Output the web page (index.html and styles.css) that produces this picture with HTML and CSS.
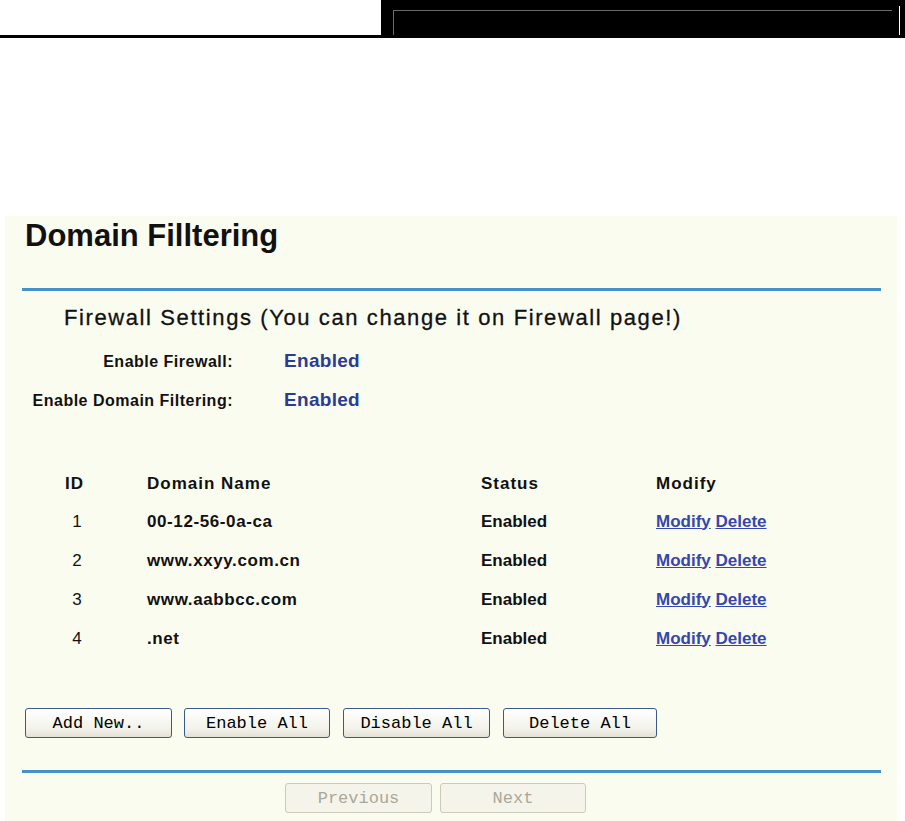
FILE: index.html
```html
<!DOCTYPE html>
<html lang="en">
<head>
<meta charset="utf-8">
<title>Domain Filtering</title>
<link rel="stylesheet" href="styles.css">
</head>
<body>
<div class="topbar">
  <div class="top-left"></div>
  <div class="top-right">
    <div class="frame"></div>
    <div class="wline"></div>
  </div>
</div>

<div class="panel">
  <h1 class="title">Domain Filltering</h1>
  <div class="rule"></div>
  <h2 class="subtitle">Firewall Settings (You can change it on Firewall page!)</h2>
  <div class="setting">
    <span class="label">Enable Firewall:</span>
    <span class="value">Enabled</span>
  </div>
  <div class="setting">
    <span class="label">Enable Domain Filtering:</span>
    <span class="value">Enabled</span>
  </div>

  <div class="grid">
    <div class="hd c-id">ID</div>
    <div class="hd c-name">Domain Name</div>
    <div class="hd c-status">Status</div>
    <div class="hd c-mod">Modify</div>

    <div class="cell c-id num">1</div>
    <div class="cell c-name">00-12-56-0a-ca</div>
    <div class="cell c-status">Enabled</div>
    <div class="cell c-mod"><a href="#">Modify</a> <a href="#">Delete</a></div>

    <div class="cell c-id num">2</div>
    <div class="cell c-name">www.xxyy.com.cn</div>
    <div class="cell c-status">Enabled</div>
    <div class="cell c-mod"><a href="#">Modify</a> <a href="#">Delete</a></div>

    <div class="cell c-id num">3</div>
    <div class="cell c-name">www.aabbcc.com</div>
    <div class="cell c-status">Enabled</div>
    <div class="cell c-mod"><a href="#">Modify</a> <a href="#">Delete</a></div>

    <div class="cell c-id num">4</div>
    <div class="cell c-name">.net</div>
    <div class="cell c-status">Enabled</div>
    <div class="cell c-mod"><a href="#">Modify</a> <a href="#">Delete</a></div>
  </div>

  <div class="actions">
    <button class="btn w147">Add New..</button>
    <button class="btn w146">Enable All</button>
    <button class="btn w147">Disable All</button>
    <button class="btn w154">Delete All</button>
  </div>
  <div class="rule rule-bottom"></div>
  <div class="nav">
    <button class="btn w147" disabled>Previous</button>
    <button class="btn w146" disabled>Next</button>
  </div>
</div>
</body>
</html>
```

FILE: styles.css
```css
html, body {
  margin: 0;
  padding: 0;
  background: #ffffff;
}
body {
  width: 905px;
  height: 821px;
  overflow: hidden;
  font-family: "Liberation Sans", Arial, sans-serif;
  color: #111;
}

/* top header strip */
.topbar {
  display: flex;
  height: 35px;
  border-bottom: 3px solid #000;
}
.top-left {
  width: 381px;
  background: #fff;
}
.top-right {
  flex: 1;
  background: #000;
  display: flex;
  align-items: flex-end;
  padding-left: 12px;
}
.frame {
  width: 498px;
  height: 24px;
  border-top: 1px solid #6a6a6a;
  border-left: 1px solid #6a6a6a;
}
.wline {
  width: 1px;
  height: 29px;
  background: #fff;
  margin-left: 7px;
}

/* content panel */
.panel {
  margin: 178px 8px 0 5px;
  background: #fbfcf0;
  padding: 2px 16px 20px 17px;
  height: 600px;
}
.title {
  margin: 0 0 0 3px;
  font-size: 31px;
  line-height: 36px;
  font-weight: bold;
  color: #111;
}
.rule {
  height: 3px;
  background: #4592c8;
  margin-top: 34px;
}
.subtitle {
  margin: 14px 0 0 42px;
  font-size: 22px;
  line-height: 26px;
  font-weight: normal;
  letter-spacing: 1.6px;
  color: #111;
  -webkit-text-stroke: 0.3px #111;
}
.setting {
  display: flex;
  align-items: baseline;
  height: 39px;
  line-height: 39px;
}
.subtitle + .setting { margin-top: 10px; }
.label {
  width: 211px;
  text-align: right;
  font-size: 16px;
  font-weight: bold;
  letter-spacing: 0.5px;
  color: #111;
}
.value {
  margin-left: 51px;
  font-size: 19px;
  font-weight: bold;
  letter-spacing: 0.3px;
  color: #2b3c92;
}

/* table */
.grid {
  margin-top: 46px;
  display: grid;
  grid-template-columns: 108px 17px 334px 175px 1fr;
  grid-template-rows: 37px repeat(4, 39px);
  align-items: center;
}
.c-id { grid-column: 1; text-align: center; }
.c-name { grid-column: 3; }
.c-status { grid-column: 4; }
.c-mod { grid-column: 5; }
.hd {
  font-size: 17px;
  font-weight: bold;
  letter-spacing: 1px;
  color: #111;
}
.hd.c-id { text-align: left; margin-left: 43px; }
.cell {
  font-size: 17px;
  font-weight: bold;
  color: #111;
}
.cell.c-name { letter-spacing: 0.6px; }
.cell.num {
  font-weight: normal;
  padding-left: 2px;
}
.c-mod a {
  color: #3447ad;
  text-decoration: underline;
}

/* buttons */
.actions {
  margin-top: 50px;
  margin-left: 3px;
  display: flex;
  gap: 12px;
}
.btn {
  height: 30px;
  box-sizing: border-box;
  border: 1px solid #3b5a8c;
  border-radius: 3px;
  background: linear-gradient(#ffffff, #f3f2ea 70%, #e4e2d6);
  font-family: "Liberation Mono", "Courier New", monospace;
  font-size: 17px;
  color: #000;
  padding: 0;
}
.btn[disabled] {
  border-color: #cdcab9;
  background: #f5f4ea;
  color: #aaa899;
}
.w146 { width: 146px; }
.w147 { width: 147px; }
.w154 { width: 154px; }
.actions .btn:nth-child(3), .actions .btn:nth-child(4) { margin-left: 1px; }
.rule-bottom {
  margin-top: 32px;
}
.nav {
  margin-top: 10px;
  margin-left: 263px;
  display: flex;
  gap: 8px;
}
```
